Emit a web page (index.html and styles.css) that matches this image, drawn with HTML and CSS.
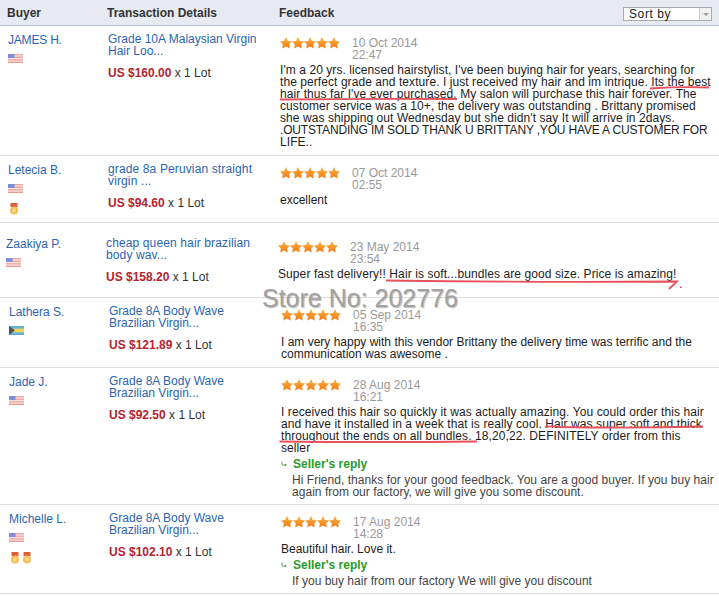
FILE: index.html
```html
<!DOCTYPE html>
<html lang="en">
<head>
  <meta charset="UTF-8" />
  <title>Store Feedback</title>
  <link rel="stylesheet" href="styles.css">
</head>
<body>

  <!-- shared icons -->
  <svg class="icon-defs" width="0" height="0">
    <defs>
      <linearGradient id="starFill" x1="0" y1="0" x2="0" y2="1">
        <stop offset="0" stop-color="#ffb347" />
        <stop offset="1" stop-color="#f0780f" />
      </linearGradient>
      <symbol id="stars" viewBox="0 0 60 12">
        <path id="star" fill="url(#starFill)" d="M6 0L7.9 3.9 12 4.5 9.1 7.4 9.8 11.6 6 9.6 2.2 11.6 2.9 7.4 0 4.5 4.1 3.9z" />
        <use href="#star" x="12" />
        <use href="#star" x="24" />
        <use href="#star" x="36" />
        <use href="#star" x="48" />
      </symbol>
      <symbol id="flag-us" viewBox="0 0 15 9">
        <rect width="15" height="9" fill="#f6e4e2" />
        <rect y="0" width="15" height="1.3" fill="#eda59c" />
        <rect y="2.6" width="15" height="1.3" fill="#eda59c" />
        <rect y="5.2" width="15" height="1.3" fill="#eda59c" />
        <rect y="7.7" width="15" height="1.3" fill="#e99a92" />
        <rect width="6.5" height="4" fill="#7d8fdc" />
      </symbol>
      <symbol id="flag-bs" viewBox="0 0 15 9">
        <rect width="15" height="9" fill="#f3d659" />
        <rect width="15" height="2.6" fill="#5fb4d6" />
        <rect y="6.4" width="15" height="2.6" fill="#5fb4d6" />
        <path d="M0 0l6 4.5L0 9z" fill="#4a5560" />
      </symbol>
      <symbol id="medal" viewBox="0 0 8 12">
        <rect x="0.5" width="7" height="4" fill="#d9613a" />
        <circle cx="4" cy="7.6" r="4" fill="#f4bd55" />
        <circle cx="4" cy="7.6" r="2" fill="#fadb8e" />
      </symbol>
      <symbol id="reply-arrow" viewBox="0 0 6 6">
        <path d="M1 0.5V4H4.5" fill="none" stroke="#5aa860" stroke-width="1" />
        <path d="M3.8 2.4L6 4 3.8 5.6z" fill="#5aa860" />
      </symbol>
    </defs>
  </svg>

  <div class="page">

    <div class="head">
      <span>Buyer</span>
      <span>Transaction Details</span>
      <span>Feedback</span>
      <div class="sort">
        <span class="sort-label">Sort by</span>
        <span class="sort-arrow"></span>
      </div>
    </div>

    <div class="row">
      <div class="buyer">
        <a class="name name-caps">JAMES H.</a>
        <svg class="flag"><use href="#flag-us" /></svg>
      </div>
      <div class="details">
        <a class="product">Grade 10A Malaysian Virgin Hair Loo...</a>
        <p class="price"><b>US $160.00</b> x 1 Lot</p>
      </div>
      <div class="feedback">
        <div class="meta">
          <svg class="stars"><use href="#stars" /></svg>
          <span class="date">10 Oct 2014<br>22:47</span>
        </div>
        <p class="text text-long">I'm a 20 yrs. licensed hairstylist, I've been buying hair for years, searching for the perfect grade and texture. I just received my hair and im intrique. Its the best hair thus far I've ever purchased. My salon will purchase this hair forever. The customer service was a 10+, the delivery was outstanding . Brittany promised she was shipping out Wednesday but she didn't say It will arrive in 2days. <span class="caps-tight">.OUTSTANDING IM SOLD THANK U BRITTANY ,YOU HAVE A CUSTOMER FOR</span> LIFE..</p>
      </div>
    </div>

    <div class="row">
      <div class="buyer">
        <a class="name">Letecia B.</a>
        <svg class="flag"><use href="#flag-us" /></svg>
        <div class="medals"><svg class="medal"><use href="#medal" /></svg></div>
      </div>
      <div class="details">
        <a class="product product-wide">grade 8a Peruvian straight virgin ...</a>
        <p class="price"><b>US $94.60</b> x 1 Lot</p>
      </div>
      <div class="feedback">
        <div class="meta">
          <svg class="stars"><use href="#stars" /></svg>
          <span class="date">07 Oct 2014<br>02:55</span>
        </div>
        <p class="text">excellent</p>
      </div>
    </div>

    <div class="row row-tall">
      <div class="buyer">
        <a class="name">Zaakiya P.</a>
        <svg class="flag"><use href="#flag-us" /></svg>
      </div>
      <div class="details">
        <a class="product product-wide">cheap queen hair brazilian body wav...</a>
        <p class="price"><b>US $158.20</b> x 1 Lot</p>
      </div>
      <div class="feedback">
        <div class="meta">
          <svg class="stars"><use href="#stars" /></svg>
          <span class="date">23 May 2014<br>23:54</span>
        </div>
        <p class="text text-wide">Super fast delivery!! Hair is soft...bundles are good size. Price is amazing!</p>
      </div>
    </div>

    <div class="row row-shift">
      <div class="buyer">
        <a class="name">Lathera S.</a>
        <svg class="flag"><use href="#flag-bs" /></svg>
      </div>
      <div class="details">
        <a class="product">Grade 8A Body Wave Brazilian Virgin...</a>
        <p class="price"><b>US $121.89</b> x 1 Lot</p>
      </div>
      <div class="feedback">
        <div class="meta">
          <svg class="stars"><use href="#stars" /></svg>
          <span class="date">05 Sep 2014<br>16:35</span>
        </div>
        <p class="text">I am very happy with this vendor Brittany the delivery time was terrific and the communication was awesome .</p>
      </div>
    </div>

    <div class="row row-shift row-snug">
      <div class="buyer">
        <a class="name">Jade J.</a>
        <svg class="flag"><use href="#flag-us" /></svg>
      </div>
      <div class="details">
        <a class="product">Grade 8A Body Wave Brazilian Virgin...</a>
        <p class="price"><b>US $92.50</b> x 1 Lot</p>
      </div>
      <div class="feedback">
        <div class="meta">
          <svg class="stars"><use href="#stars" /></svg>
          <span class="date">28 Aug 2014<br>16:21</span>
        </div>
        <p class="text text-wide">I received this hair so quickly it was actually amazing. You could order this hair and have it installed in a week that is really cool. Hair was super soft and thick throughout the ends on all bundles. 18,20,22. DEFINITELY order from this<br>seller</p>
        <div class="reply-head">
          <svg class="reply-icon"><use href="#reply-arrow" /></svg>
          <span>Seller's reply</span>
        </div>
        <p class="reply-text reply-wide">Hi Friend, thanks for your good feedback. You are a good buyer. If you buy hair again from our factory, we will give you some discount.</p>
      </div>
    </div>

    <div class="row row-shift row-snug">
      <div class="buyer">
        <a class="name">Michelle L.</a>
        <svg class="flag"><use href="#flag-us" /></svg>
        <div class="medals">
          <svg class="medal"><use href="#medal" /></svg>
          <svg class="medal"><use href="#medal" /></svg>
        </div>
      </div>
      <div class="details">
        <a class="product">Grade 8A Body Wave Brazilian Virgin...</a>
        <p class="price"><b>US $102.10</b> x 1 Lot</p>
      </div>
      <div class="feedback">
        <div class="meta">
          <svg class="stars"><use href="#stars" /></svg>
          <span class="date">17 Aug 2014<br>14:28</span>
        </div>
        <p class="text">Beautiful hair. Love it.</p>
        <div class="reply-head">
          <svg class="reply-icon"><use href="#reply-arrow" /></svg>
          <span>Seller's reply</span>
        </div>
        <p class="reply-text">If you buy hair from our factory We will give you discount</p>
      </div>
    </div>

    <!-- hand drawn marks on top of the screenshot -->
    <svg class="marks" viewBox="0 0 719 596">
      <path d="M650 88.5Q680 86.5 709 87.5" />
      <path d="M280 99.5Q370 98.5 457 99" />
      <path d="M386 280.5Q530 282.5 677 281.5L669 289" />
      <path d="M681 286.5v1.5" />
      <path d="M545 427.5Q548 425.5 560 427Q630 428.5 703 426.5" />
      <path d="M279.5 441.5Q380 442.5 477 441.5" />
    </svg>

    <div class="watermark">Store No: 202776</div>
  </div>

</body>
</html>
```

FILE: styles.css
```css
body {
  margin: 0;
  font-family: "Liberation Sans", Arial, sans-serif;
  font-size: 12px;
  line-height: 12px;
  color: #1c1c1c;
  background-color: white;
}

p {
  margin: 0;
}

.icon-defs {
  position: absolute;
}

.page {
  position: relative;
  width: 719px;
  height: 596px;
  overflow: hidden;
}

.head {
  display: grid;
  grid-template-columns: 100px 172px 1fr auto;
  align-items: center;
  height: 25px;
  padding: 0 7px;
  background-color: #e8eaf2;
  border-bottom: 1px solid #b9bfd2;
  font-weight: bold;
  color: #333;
}

.sort {
  display: flex;
  width: 87px;
  height: 12px;
  margin-top: 3px;
  background-color: white;
  border: 1px solid #aaa;
  font-weight: normal;
  color: #222;
}

.sort-label {
  flex: 1;
  padding-left: 5px;
  letter-spacing: 0.6px;
}

.sort-arrow {
  position: relative;
  width: 11px;
  background-color: #f0f0f0;
  border-left: 1px solid #ccc;
}

.sort-arrow::after {
  content: "";
  position: absolute;
  top: 5px;
  left: 3px;
  border: 3px solid transparent;
  border-top: 3px solid #999;
}

.row {
  display: grid;
  grid-template-columns: 100px 172px 433px;
  padding: 7px 0 7px 8px;
  border-bottom: 1px solid #ddd;
}

.row-tall {
  padding: 14px 0 14px 6px;
}

.row-shift {
  padding-left: 9px;
}

.row-snug {
  padding-bottom: 6px;
}

.buyer {
  display: flex;
  flex-direction: column;
  align-items: flex-start;
  padding-top: 1px;
}

.name,
.product {
  color: #2b64b2;
}

.name-caps {
  letter-spacing: -0.2px;
}

.flag {
  width: 15px;
  height: 9px;
  margin-top: 8px;
}

.medals {
  display: flex;
  gap: 4px;
  margin: 10px 0 0 2px;
}

.medal {
  width: 8px;
  height: 12px;
}

.details {
  width: 155px;
}

.product {
  display: block;
}

.product-wide {
  letter-spacing: 0.13px;
}

.price {
  margin-top: 10px;
  color: #333;
}

.price b {
  color: #b3242e;
}

.meta {
  display: flex;
  gap: 12px;
  margin-top: 4px;
}

.stars {
  width: 60px;
  height: 12px;
}

.date {
  color: #999;
}

.text {
  margin-top: 3px;
}

.text-long {
  letter-spacing: 0.07px;
}

.text-wide {
  letter-spacing: 0.09px;
}

.caps-tight {
  letter-spacing: -0.17px;
}

.reply-head {
  display: flex;
  align-items: center;
  gap: 6px;
  margin-top: 4px;
  font-weight: bold;
  color: #2a9a2a;
}

.reply-icon {
  width: 6px;
  height: 6px;
}

.reply-text {
  margin-top: 4px;
  padding-left: 11px;
  color: #444;
}

.reply-wide {
  letter-spacing: 0.035px;
}

.marks {
  position: absolute;
  top: 0;
  left: 0;
  width: 719px;
  height: 596px;
  pointer-events: none;
}

.marks path {
  fill: none;
  stroke: #e8505b;
  stroke-width: 1.8;
}

.watermark {
  position: absolute;
  top: 284px;
  left: 262px;
  font-size: 25px;
  line-height: 28px;
  color: #a2a2a2;
  text-shadow: 1px 1px 1px rgba(120, 120, 120, 0.5);
  white-space: nowrap;
}
```
